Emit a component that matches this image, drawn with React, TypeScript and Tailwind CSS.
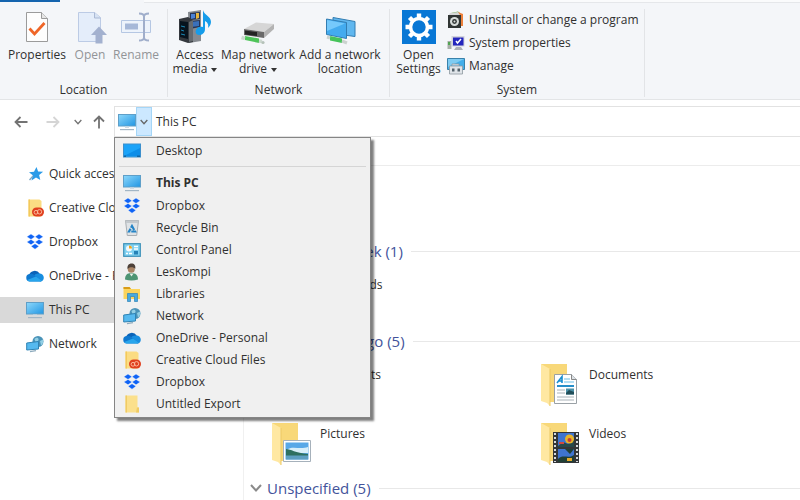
import type { ReactNode } from "react";

type IconProps = { className?: string };

const MonitorIcon = ({ className = "w-[18px] h-[18px]" }: IconProps) => (
  <svg viewBox="0 0 18 18" className={className} aria-hidden="true">
    <defs>
      <linearGradient id="screen" x1="0" y1="0" x2="1" y2="1">
        <stop offset="0" stopColor="#8ed8fb" />
        <stop offset="1" stopColor="#2196e3" />
      </linearGradient>
    </defs>
    <rect x="0.5" y="1.5" width="17" height="11.5" fill="url(#screen)" stroke="#5f9fc8" />
    <path d="M7 13.5h4v1.500H7z" fill="#cfdbe4" />
    <path d="M2 16h14v1.200H2z" fill="#a3b6c5" />
  </svg>
);

const DesktopIcon = ({ className = "w-[18px] h-[18px]" }: IconProps) => (
  <svg viewBox="0 0 18 18" className={className} aria-hidden="true">
    <rect x="0.5" y="2" width="17" height="13" fill="#1ba3f8" stroke="#3c8fcc" />
    <path d="M1 14 17 6v8z" fill="#0d8ee8" />
    <path d="M1 13.500h2v1.500H1zM14 13.500h3v1.500h-3z" fill="#1466a4" />
  </svg>
);

const DropboxIcon = ({ className = "w-[18px] h-[18px]" }: IconProps) => (
  <svg viewBox="0 0 18 18" className={className} aria-hidden="true">
    <path
      d="M5 1 9 3.700 5 6.400.8 3.700zM13 1l4.200 2.700L13 6.400 9 3.700zM5 6.400 9 9.100l-4 2.700L.8 9.100zM13 6.400l4.200 2.700-4.200 2.700L9 9.100zM9 10.700l4 2.600-4 2.900-4-2.900z"
      fill="#0f63f5"
      stroke="#fff"
      strokeWidth="0.4"
    />
  </svg>
);

const RecycleIcon = ({ className = "w-[18px] h-[18px]" }: IconProps) => (
  <svg viewBox="0 0 18 18" className={className} aria-hidden="true">
    <path d="M2.500 1.500h13l-1.800 15H4.300z" fill="#dfe3e6" stroke="#a9aeb2" />
    <path d="M2.500 1.500h13l-.4 2.500H2.900z" fill="#c3c8cc" />
    <path d="M9 7 12 12.500H6z" fill="none" stroke="#2584c6" strokeWidth="2.200" strokeDasharray="4.500 1" />
  </svg>
);

const ControlPanelIcon = ({ className = "w-[18px] h-[18px]" }: IconProps) => (
  <svg viewBox="0 0 18 18" className={className} aria-hidden="true">
    <rect x="0.7" y="2.700" width="16.600" height="12.600" fill="#7fd0f0" stroke="#3d91b8" strokeWidth="1.200" />
    <circle cx="6" cy="7.500" r="3" fill="#f3f8fb" />
    <path d="M6 7.500v-3a3 3 0 0 1 3 3z" fill="#f1a51d" />
    <path d="M3 12.500h2M6 12.500h3M11 5.500h4M11 8h4" stroke="#fff" strokeWidth="1.300" />
    <path d="M11 10h4v3.500h-4z" fill="#2581b6" />
  </svg>
);

const UserIcon = ({ className = "w-[18px] h-[18px]" }: IconProps) => (
  <svg viewBox="0 0 18 18" className={className} aria-hidden="true">
    <path d="M2 16.500c0-4.500 2.500-6.500 6-6.500 4.500 0 7 2 7 6.500-4 1.200-9 1.200-13 0z" fill="#4d9473" />
    <path d="m6.500 10.500 2 3 2-3z" fill="#e9f0ea" />
    <circle cx="8.300" cy="6.300" r="3.500" fill="#a98465" />
    <path d="M4.500 6C4 2.700 5.800.5 8.500.5s4.500 2 3.700 5.500c-1-2-4-2-5.700-1.500z" fill="#4c4038" />
  </svg>
);

const LibrariesIcon = ({ className = "w-[18px] h-[18px]" }: IconProps) => (
  <svg viewBox="0 0 18 18" className={className} aria-hidden="true">
    <path d="M.5 2h6L8 4h9v10H.5z" fill="#fbd45c" />
    <path d="M.5 2h6L8 4H.5z" fill="#d89b18" />
    <path d="M4.500 16.500v-8h10v8h-3v-5h-4v5z" fill="#48a9de" stroke="#2d83b9" strokeWidth="0.700" />
  </svg>
);

const NetworkIcon = ({ className = "w-[18px] h-[18px]" }: IconProps) => (
  <svg viewBox="0 0 18 18" className={className} aria-hidden="true">
    <circle cx="12" cy="6.500" r="5.500" fill="#4a93b8" />
    <path d="M8.500 4c2-2 3.500-1.500 4 0s-1 3-3 3zM14 6l3-1.500c.8 3-.5 5-2 6z" fill="#92cfe5" />
    <path d="M.7 8 12.500 6.500V14L.7 15z" fill="#55b9ef" stroke="#2f83b4" />
    <path d="m4 16.700 6-1" stroke="#8eabbd" strokeWidth="1.300" />
  </svg>
);

const OneDriveIcon = ({ className = "w-[18px] h-[18px]" }: IconProps) => (
  <svg viewBox="0 0 18 18" className={className} aria-hidden="true">
    <path d="M3 8a6 6 0 0 1 10.700-1.500L9 11z" fill="#0b63b8" />
    <path d="M13 6.500a4.200 4.200 0 0 1 4.800 4.200c0 2.300-1.500 3.800-3.600 3.800L7 9.500c1.500-2 3.700-3.300 6-3z" fill="#188ee0" />
    <path d="M4 7c2.500-.6 4 .8 5.500 2l6.500 4.800c-.6.500-1.200.7-2 .7H4A3.700 3.700 0 0 1 4 7z" fill="#0f78cf" />
    <path d="M1.200 13 10 9.500l6 4.300c-.6.500-1.200.7-2 .7H4c-1.200 0-2.200-.6-2.800-1.500z" fill="#28a5ec" />
  </svg>
);

const CreativeIcon = ({ className = "w-[18px] h-[18px]" }: IconProps) => (
  <svg viewBox="0 0 18 18" className={className} aria-hidden="true">
    <path d="M2.500.5h11l2 1.500v15.500h-13z" fill="#fbdc83" />
    <path d="M2.500.5H4v17H2.500z" fill="#f3c95c" />
    <rect x="6" y="8.500" width="12" height="9" rx="4.500" fill="#e0401f" />
    <circle cx="10" cy="13.300" r="1.900" fill="none" stroke="#fbb79a" />
    <circle cx="13.500" cy="12.800" r="2.200" fill="none" stroke="#fbb79a" />
  </svg>
);

const FileFolderIcon = ({ className = "w-[18px] h-[18px]" }: IconProps) => (
  <svg viewBox="0 0 18 18" className={className} aria-hidden="true">
    <path d="M2.500.5h12v12h1.500v5H2.500z" fill="#fbe08c" />
    <path d="M2.500.5H4v17H2.500zM14 12.500h2v5h-3z" fill="#f0cb64" />
  </svg>
);

const StarIcon = ({ className = "w-[18px] h-[18px]" }: IconProps) => (
  <svg viewBox="0 0 18 18" className={className} aria-hidden="true">
    <path d="m10.500 2 1.600 4.500 5 .2-4 3.200 1.200 5.100-4.300-2.600-4.500 3 1.300-5.200L3 7.200l5-.5z" fill="#2b9be8" />
    <path d="m7 11-3.500 4" stroke="#7aa7c8" strokeWidth="1.300" />
  </svg>
);

const PropertiesIcon = () => (
  <svg viewBox="0 0 34 34" className="h-[34px] w-[34px]" aria-hidden="true">
    <path d="M6.500 2.500h15l6 6v23h-21z" fill="#fdfdfd" stroke="#9b9b9b" />
    <path d="M21.500 2.500v6h6" fill="#e6e6e6" stroke="#9b9b9b" />
    <path d="m9.500 18.500 5 5.500 10-11" fill="none" stroke="#ef6527" strokeWidth="2.800" />
  </svg>
);

const OpenIcon = () => (
  <svg viewBox="0 0 34 34" className="h-[34px] w-[34px]" aria-hidden="true">
    <path d="M5.500 2.500h16l6 5v24h-22z" fill="#e4edfa" stroke="#bccbe5" />
    <path d="M21.500 2.500v5.500h6" fill="#d6e2f3" stroke="#aab9d4" />
    <path d="m26 16.500 8 8.500h-4.500v8.500h-7V25H18z" fill="#a3b1cf" />
  </svg>
);

const RenameIcon = () => (
  <svg viewBox="0 0 34 34" className="h-[34px] w-[34px]" aria-hidden="true">
    <path d="M2.500 10.500h29v12h-29z" fill="#edf3fb" stroke="#b5c7e3" />
    <path d="M6 13.500h13v6H6z" fill="#a6b8d8" />
    <path d="M20 3.500c3 0 5 .5 5 3v21c0 2-2 3-5 3M30 3.500c-3 0-5 .5-5 3v21c0 2 2 3 5 3" fill="none" stroke="#a0aecb" strokeWidth="2" />
  </svg>
);

const MediaIcon = () => (
  <svg viewBox="0 0 36 36" className="h-9 w-9" aria-hidden="true">
    <path d="m11 3 13-2v31l-12 2z" fill="#858a90" />
    <path d="m13 4 10-1v7l-10 1zM13 12l10-1v7l-10 2z" fill="#263555" />
    <path d="M14 5h4v4l-4 1z" fill="#4b82d5" />
    <path d="M19 4h3v5l-3 1z" fill="#e7b63b" />
    <path d="m14 13 8-1v5l-8 1z" fill="#3a70ba" />
    <path d="m2 10 9-2 5 3v22l-5 1-9-3z" fill="#34383d" />
    <path d="m3 12 8 1v17l-8-2z" fill="#07131d" />
    <path d="m4 17 4 1M4 21l3 1M4 25l4 1" stroke="#1b89b6" />
    <path d="m12 13 4-2v21l-4 1z" fill="#666b70" />
    <path d="M26 1c1 5 8 6 8 12 0 3-2 5-3 6 1-4-1-6-3-7v8c0 4-3 6-6 6s-4-3-3-5c1-3 4-4 7-3z" fill="#159cea" />
  </svg>
);

const DriveIcon = () => (
  <svg viewBox="0 0 36 36" className="h-9 w-9" aria-hidden="true">
    <path d="m4 20 12-6.500 18 1.500-10 8z" fill="#d6d6d6" />
    <path d="m4 20 20 3v6L4 26z" fill="#696969" />
    <path d="m5 21.500 12 1.500v4L5 25.500z" fill="#242424" />
    <path d="m24 23 10-8v5l-10 9z" fill="#b3b3b3" />
    <path d="m5 27 14 2.500V34L5 31z" fill="#4fc45a" />
    <path d="m19 32 3 .5M1.500 28.500l3.500 1" stroke="#cdd9d0" strokeWidth="3.500" />
    <circle cx="23" cy="33.500" r="1.600" fill="#b5c2b9" />
  </svg>
);

const LocationIcon = () => (
  <svg viewBox="0 0 36 36" className="h-9 w-9" aria-hidden="true">
    <path d="m11 8.500 22 4v15l-22-3z" fill="#60b7ef" stroke="#327db2" />
    <path d="m4.500 10 20 3.500v16l-20-4z" fill="#43abef" stroke="#327db2" />
    <path d="m5 11 18 3.500L5 22z" fill="#75c9fb" />
    <path d="m8 27 12 2.500V34L8 31.500z" fill="#45c35a" />
    <path d="m20 32 5 2M5 28l3 1" stroke="#cbd3cf" strokeWidth="3" />
  </svg>
);

const GearIcon = () => (
  <svg viewBox="0 0 34 34" className="h-[34px] w-[34px]" aria-hidden="true">
    <path d="M0 0h34v34H0z" fill="#0877d5" />
    <circle cx="17" cy="17" r="8.500" fill="none" stroke="#fff" strokeWidth="3.600" />
    <g stroke="#fff" strokeWidth="4.400">
      <path d="M17 3.500V8M17 26v4.500M3.500 17H8M26 17h4.500M7.500 7.500l3 3M23.500 23.500l3 3M26.500 7.500l-3 3M10.500 23.500l-3 3" />
    </g>
  </svg>
);

const UninstallIcon = () => (
  <svg viewBox="0 0 18 18" className="h-[18px] w-[18px] shrink-0" aria-hidden="true">
    <path d="m4 2 7-1.500L14 3v12l-2 2z" fill="#66a83e" />
    <path d="m11 1 5 2v12h-3z" fill="#ed803b" />
    <path d="m3 2 8-1 2 3H2z" fill="#d4d6d6" />
    <path d="M1 4h13v13H1z" fill="#303534" />
    <circle cx="7.500" cy="10.500" r="4.500" fill="#d9dedc" />
    <circle cx="7.500" cy="10.500" r="2.400" fill="#303534" />
    <circle cx="7.500" cy="10.500" r="1" fill="#d9dedc" />
  </svg>
);

const SystemIcon = () => (
  <svg viewBox="0 0 18 18" className="h-[18px] w-[18px] shrink-0" aria-hidden="true">
    <path d="M.5 7h4v8h-4z" fill="#a8aea8" />
    <path d="M1 8h2v3H1z" fill="#51a352" />
    <path d="M4.500 2h13v10.500h-13z" fill="#d3d4dc" />
    <path d="M6 3.500h10.500v8H6z" fill="#2426bd" />
    <path d="m9 7 1.500 2L14 5" fill="none" stroke="#fff" strokeWidth="1.500" />
    <path d="M9 13h5l2 3H7z" fill="#aeb1b7" />
  </svg>
);

const ManageIcon = () => (
  <svg viewBox="0 0 18 18" className="h-[18px] w-[18px] shrink-0" aria-hidden="true">
    <path d="M.5 1.500h17v11H.5z" fill="#42aeea" stroke="#3981aa" />
    <path d="M1 2h16L1 10z" fill="#7dcbf2" />
    <path d="M5 8.500V7h7v1.500M2.500 9h13v8h-13z" fill="#dfe4e9" stroke="#8d989f" strokeWidth="0.800" />
    <path d="M5 11.500h2.500v3H5zM10.500 11.500H13v3h-2.500z" fill="#53616b" />
  </svg>
);

const FolderIcon = ({ children }: { children?: ReactNode }) => (
  <svg viewBox="0 0 42 44" className="h-11 w-[42px] shrink-0" aria-hidden="true">
    <path d="M2 1h26v38H10z" fill="#f8d879" />
    <path d="m2 1 9 5v37l-3-3-6-2z" fill="#ffe8a2" />
    <path d="M11 6v37" stroke="#ebc864" />
    {children}
  </svg>
);

const PictureArt = () => (
  <>
    <path d="M13.500 18.500h27v21h-27z" fill="#fff" stroke="#a6b1bb" />
    <path d="M15.500 20.500h23v17h-23z" fill="#58a8e7" />
    <path d="M16 28c7-5 13 0 22-3v6H16z" fill="#d7eef9" />
    <path d="M16 27c5 0 9 4 22 5v2H16z" fill="#2e7061" />
    <path d="M16 33.500h22v4H16z" fill="#5d9fc2" />
  </>
);

const DocumentArt = () => (
  <>
    <path d="M15.500 11.500h17l5 5v24h-22z" fill="#fff" stroke="#9aa1a6" />
    <path d="M32.500 11.500v5h5" fill="#dce1e5" stroke="#888" />
    <path d="m18 20 5-6.500V20M20 18h3" fill="none" stroke="#188ed0" strokeWidth="1.600" />
    <path d="M25 16h6M25 19h10" stroke="#9dd5ef" strokeWidth="1.400" />
    <path d="M18 23h17" stroke="#278fca" strokeWidth="2" />
    <path d="M18 27h8M18 30h8M18 34h17M18 37h17" stroke="#a9b2b8" />
    <path d="M27 25.500h8v6h-8z" fill="#4c91a8" />
    <path d="m27 30 3-3 5 2v2.500h-8z" fill="#214e59" />
  </>
);

const VideoArt = () => (
  <>
    <path d="M14 10h26v31H14z" fill="#333638" />
    <path d="M16 11v29M38 11v29" stroke="#d7dadd" strokeWidth="2" strokeDasharray="2 2" />
    <path d="M19 11h16v14H19zM19 27h16v13H19z" fill="#3f74d0" />
    <path d="m19 24 5-4 5 2 6-4v7H19z" fill="#26484a" />
    <circle cx="30.500" cy="17" r="4.500" fill="#e8b428" />
    <circle cx="30.500" cy="18" r="2" fill="#c53b38" />
    <path d="M20 20h5v2h-5z" fill="#d0493f" />
    <path d="M26 27h9l-4 5zM19 37c4-5 11 0 16-4v7H19z" fill="#213f36" />
    <path d="M28 36h5v3h-5z" fill="#e8ab29" />
  </>
);

const places = [
  { label: "Quick access", Icon: StarIcon },
  { label: "Creative Cloud Files", Icon: CreativeIcon },
  { label: "Dropbox", Icon: DropboxIcon },
  { label: "OneDrive - Personal", Icon: OneDriveIcon },
  { label: "This PC", Icon: MonitorIcon, selected: true },
  { label: "Network", Icon: NetworkIcon },
];

const locations = [
  { label: "This PC", Icon: MonitorIcon, current: true },
  { label: "Dropbox", Icon: DropboxIcon },
  { label: "Recycle Bin", Icon: RecycleIcon },
  { label: "Control Panel", Icon: ControlPanelIcon },
  { label: "LesKompi", Icon: UserIcon },
  { label: "Libraries", Icon: LibrariesIcon },
  { label: "Network", Icon: NetworkIcon },
  { label: "OneDrive - Personal", Icon: OneDriveIcon },
  { label: "Creative Cloud Files", Icon: CreativeIcon },
  { label: "Dropbox", Icon: DropboxIcon },
  { label: "Untitled Export", Icon: FileFolderIcon },
];

const Caret = () => (
  <svg viewBox="0 0 6 4" className="ml-1 inline h-1 w-1.5 align-middle" aria-hidden="true">
    <path d="M0 0h6L3 4z" fill="#333" />
  </svg>
);

const Chevron = ({ className }: IconProps) => (
  <svg viewBox="0 0 12 8" className={className} fill="none" stroke="currentColor" strokeWidth="2" aria-hidden="true">
    <path d="m1 1 5 5.500L11 1" />
  </svg>
);

interface RibbonButtonProps {
  icon: ReactNode;
  className: string;
  disabled?: boolean;
  children: ReactNode;
}

const RibbonButton = ({ icon, className, disabled, children }: RibbonButtonProps) => (
  <button disabled={disabled} className={`flex shrink-0 flex-col items-center leading-[14px] disabled:text-[#929497] ${className}`}>
    <span className="flex h-9 items-center">{icon}</span>
    <span className="mt-[3px] whitespace-nowrap">{children}</span>
  </button>
);

interface RibbonGroupProps {
  label: string;
  className: string;
  children: ReactNode;
}

const RibbonGroup = ({ label, className, children }: RibbonGroupProps) => (
  <section className={`flex shrink-0 flex-col border-r border-[#e2e4e7] ${className}`}>
    <div className="flex h-[74px]">{children}</div>
    <h2 className="text-center leading-[14px]">{label}</h2>
  </section>
);

const Ribbon = () => (
  <header className="border-b border-[#e3e5e7] bg-[#f4f6f9]">
    <div className="flex h-[3px] items-start">
      <div className="h-0.5 w-[60px] bg-[#1464ae]" />
      <div className="h-0.5 w-[84px]" />
      <div className="h-[3px] flex-1 border-b border-[#e5e7ea] bg-[#fafbfc]" />
    </div>
    <div className="flex pt-1.5 pb-0.5">
      <RibbonGroup label="Location" className="w-[168px]">
        <RibbonButton icon={<PropertiesIcon />} className="w-[74px]">Properties</RibbonButton>
        <RibbonButton icon={<OpenIcon />} className="w-8" disabled>Open</RibbonButton>
        <RibbonButton icon={<RenameIcon />} className="w-[60px]" disabled>Rename</RibbonButton>
      </RibbonGroup>
      <RibbonGroup label="Network" className="w-[222px]">
        <RibbonButton icon={<MediaIcon />} className="w-[54px]">
          Access
          <br />
          media
          <Caret />
        </RibbonButton>
        <RibbonButton icon={<DriveIcon />} className="w-[72px]">
          Map network
          <br />
          drive
          <Caret />
        </RibbonButton>
        <RibbonButton icon={<LocationIcon />} className="w-[92px]">
          Add a network
          <br />
          location
        </RibbonButton>
      </RibbonGroup>
      <RibbonGroup label="System" className="w-[255px]">
        <RibbonButton icon={<GearIcon />} className="w-[57px]">
          Open
          <br />
          Settings
        </RibbonButton>
        <div className="flex flex-col">
          <button className="flex h-[22px] items-center gap-1 whitespace-nowrap"><UninstallIcon />Uninstall or change a program</button>
          <button className="flex h-6 items-center gap-1 whitespace-nowrap"><SystemIcon />System properties</button>
          <button className="flex h-[22px] items-center gap-1 whitespace-nowrap"><ManageIcon />Manage</button>
        </div>
      </RibbonGroup>
    </div>
  </header>
);

const LocationMenu = () => (
  <ul className="absolute top-full -left-px z-10 mt-px w-[257px] border border-[#858585] bg-[#f0f0f0] pb-0.5 shadow-[3px_3px_2px_rgba(0,0,0,0.5)]">
    <li className="mx-1 border-b border-[#d5d5d5] pt-0.5 pb-1">
      <button className="flex h-[22px] w-full items-center gap-[15px] pl-1"><DesktopIcon />Desktop</button>
    </li>
    <li className="h-1" />
    {locations.map(({ label, Icon, current }, index) => (
      <li key={index} className="mx-1">
        <button className={`flex w-full items-center gap-[15px] pl-1 ${current ? "h-6 font-bold" : "h-[22px]"}`}>
          <Icon />
          {label}
        </button>
      </li>
    ))}
  </ul>
);

const AddressBar = () => (
  <div className="flex items-center pt-1.5">
    <div className="flex w-[114px] shrink-0 items-center pl-3.5 text-[#737373]">
      <button aria-label="Back">
        <svg viewBox="0 0 14 14" className="h-3.5 w-3.5" fill="none" stroke="currentColor" strokeWidth="1.800"><path d="M13.500 7h-12m5-5-5 5 5 5" /></svg>
      </button>
      <button aria-label="Forward" className="ml-[18px] text-[#d5d5d5]" disabled>
        <svg viewBox="0 0 14 14" className="h-3.5 w-3.5" fill="none" stroke="currentColor" strokeWidth="1.800"><path d="M.5 7h12m-5-5 5 5-5 5" /></svg>
      </button>
      <button aria-label="Recent locations" className="ml-3.5"><Chevron className="h-1.5 w-2" /></button>
      <button aria-label="Up" className="ml-2.5">
        <svg viewBox="0 0 14 14" className="h-3.5 w-3.5" fill="none" stroke="currentColor" strokeWidth="1.800"><path d="M7 13.500v-12m-5 5 5-5 5 5" /></svg>
      </button>
    </div>
    <div className="relative flex h-[31px] flex-1 items-center border-y border-l border-[#e2e2e2] bg-white">
      <span className="pl-[3px]"><MonitorIcon /></span>
      <button aria-label="Previous locations" aria-expanded="true" className="flex h-full w-4 items-center justify-center border border-[#a5d6f7] bg-[#cce8ff] text-[#666]">
        <Chevron className="h-1.5 w-2" />
      </button>
      <span className="pl-1">This PC</span>
      <LocationMenu />
    </div>
  </div>
);

const GroupHeading = ({ children }: { children: ReactNode }) => (
  <h2 className="flex h-6 items-center text-[15px] text-[#43539b]">
    <Chevron className="mr-[5px] h-2 w-3 text-[#8a8a8a]" />
    {children}
    <span className="ml-2 h-px flex-1 bg-[#e8e8e8]" />
  </h2>
);

interface FolderItemProps {
  label: string;
  children?: ReactNode;
}

const FolderItem = ({ label, children }: FolderItemProps) => (
  <button className="flex h-[59px] items-start gap-2 text-left">
    <FolderIcon>{children}</FolderIcon>
    <span className="pt-1">{label}</span>
  </button>
);

export default function App() {
  return (
    <div className="min-h-screen overflow-hidden bg-white font-['Open_Sans','Noto_Sans',sans-serif] text-xs text-[#303030]">
      <Ribbon />
      <AddressBar />
      <div className="flex">
        <nav className="flex w-[244px] shrink-0 flex-col gap-2 border-r border-[#f0f0f0] pt-6">
          {places.map(({ label, Icon, selected }) => (
            <a key={label} href="#" className={`flex h-[26px] items-center gap-[5px] pl-[26px] ${selected ? "bg-[#d9d9d9]" : ""}`}>
              <Icon />
              {label}
            </a>
          ))}
        </nav>
        <main className="min-w-0 flex-1">
          <div className="h-[29px] border-b border-[#ececec]" />
          <div className="pt-[73px] pl-1.5">
            <GroupHeading>Earlier this week (1)</GroupHeading>
            <div className="grid grid-cols-[269px_1fr] pt-2.5 pl-5">
              <FolderItem label="Downloads" />
            </div>
            <div className="-mt-[3px] pl-2">
              <GroupHeading>A long time ago (5)</GroupHeading>
            </div>
            <div className="grid grid-cols-[269px_1fr] pt-2.5 pl-5">
              <FolderItem label="3D Objects" />
              <FolderItem label="Documents"><DocumentArt /></FolderItem>
              <FolderItem label="Pictures"><PictureArt /></FolderItem>
              <FolderItem label="Videos"><VideoArt /></FolderItem>
            </div>
            <div className="-mt-[5px]">
              <GroupHeading>Unspecified (5)</GroupHeading>
            </div>
          </div>
        </main>
      </div>
    </div>
  );
}
